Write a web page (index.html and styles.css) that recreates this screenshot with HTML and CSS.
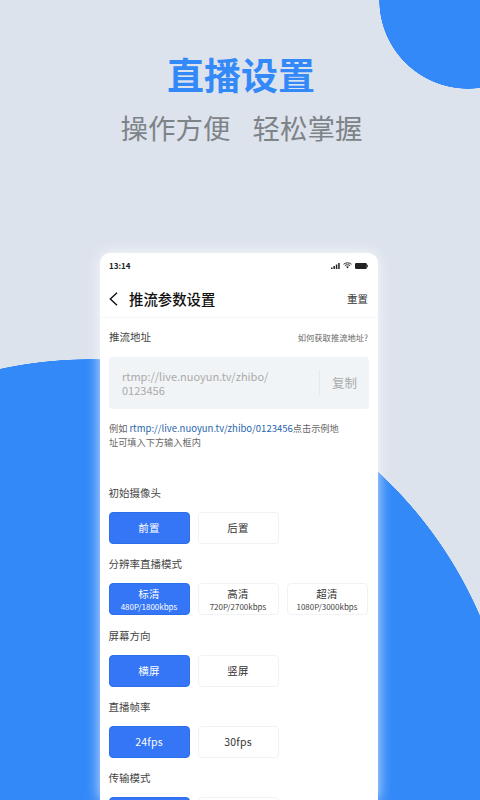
FILE: index.html
```html
<!DOCTYPE html>
<html lang="zh-CN">
<head>
<meta charset="UTF-8" />
<meta name="viewport" content="width=device-width, initial-scale=1" />
<title>直播设置</title>
<link rel="stylesheet" href="styles.css">
</head>
<body>
<div class="hero">
  <h1>直播设置</h1>
  <p class="slogan"><span>操作方便</span><span>轻松掌握</span></p>
</div>

<div class="phone">
  <div class="statusbar">
    <span class="time">13:14</span>
    <span class="status-icons">
      <svg width="9" height="6" viewBox="0 0 9 6"><rect x="0" y="4.500" width="1.500" height="1.500" fill="#222"/><rect x="2.400" y="3" width="1.500" height="3" fill="#222"/><rect x="4.800" y="1.500" width="1.500" height="4.500" fill="#222"/><rect x="7.200" y="0" width="1.500" height="6" fill="#222"/></svg>
      <svg width="9" height="7" viewBox="0 0 10 8"><path d="M.5 2.600C3 .4 7 .4 9.500 2.600M2 4.200c1.700-1.400 4.300-1.400 6 0" fill="none" stroke="#222" stroke-width="1.100"/><path d="M3.400 5.500c1-.8 2.200-.8 3.200 0L5 7.500z" fill="#222"/></svg>
      <svg width="13" height="6" viewBox="0 0 13 6"><rect x="0" y="0" width="11.800" height="6" rx="1.200" fill="#222"/><rect x="12.200" y="1.800" width=".8" height="2.400" fill="#222"/></svg>
    </span>
  </div>

  <div class="navbar">
    <svg class="back" width="9" height="14" viewBox="0 0 9 14"><path d="M8 .7L1.300 7 8 13.300" fill="none" stroke="#111" stroke-width="1.400"/></svg>
    <span class="nav-title">推流参数设置</span>
    <span class="nav-reset">重置</span>
  </div>

  <div class="content">
    <div class="addr-head">
      <span class="label">推流地址</span>
      <span class="help">如何获取推流地址?</span>
    </div>
    <div class="addr-box">
      <div class="addr-text">rtmp://live.nuoyun.tv/zhibo/<br>0123456</div>
      <div class="copy">复制</div>
    </div>
    <p class="hint">例如 <a>rtmp://live.nuoyun.tv/zhibo/0123456</a>点击示例地址可填入下方输入框内</p>

    <div class="group first">
      <div class="label">初始摄像头</div>
      <div class="options">
        <div class="opt on">前置</div>
        <div class="opt">后置</div>
      </div>
    </div>
    <div class="group">
      <div class="label">分辨率直播模式</div>
      <div class="options">
        <div class="opt on">标清<small>480P/1800kbps</small></div>
        <div class="opt">高清<small>720P/2700kbps</small></div>
        <div class="opt">超清<small>1080P/3000kbps</small></div>
      </div>
    </div>
    <div class="group">
      <div class="label">屏幕方向</div>
      <div class="options">
        <div class="opt on">横屏</div>
        <div class="opt">竖屏</div>
      </div>
    </div>
    <div class="group">
      <div class="label">直播帧率</div>
      <div class="options">
        <div class="opt on">24fps</div>
        <div class="opt">30fps</div>
      </div>
    </div>
    <div class="group">
      <div class="label">传输模式</div>
      <div class="options">
        <div class="opt on"></div>
        <div class="opt"></div>
      </div>
    </div>
  </div>
</div>
</body>
</html>
```

FILE: styles.css
```css
html, body {
  margin: 0; padding: 0;
  height: 800px;
  overflow: hidden;
}
body {
  width: 480px;
  font-family: "Noto Sans CJK SC", "Noto Sans", sans-serif;
  color: #333;
  background:
    radial-gradient(circle at 468px 0, #3489f8 88.500px, transparent 89px),
    radial-gradient(circle at 90px 784px, #3489f8 424.500px, transparent 425px),
    #dde3ed;
}
.hero {
  height: 253px;
  padding-top: 52px;
  box-sizing: border-box;
  text-align: center;
}
h1 {
  margin: 0;
  padding-left: 2px;
  font-size: 37px;
  line-height: 44px;
  font-weight: 700;
  color: #3489f8;
}
.slogan {
  margin: 11px 0 0;
  padding-left: 3px;
  font-size: 27.500px;
  line-height: 40px;
  color: #7e8388;
  display: flex;
  justify-content: center;
  gap: 22px;
}
.phone {
  width: 278px;
  height: 547px;
  margin-left: 100px;
  background: #fff;
  border-radius: 10px 10px 0 0;
  box-shadow: 0 0 14px rgba(255,255,255,0.8);
  overflow: hidden;
}
.statusbar {
  display: flex;
  justify-content: space-between;
  align-items: center;
  height: 25px;
  padding: 0 10px 1px 9px;
}
.time { font-size: 8px; font-weight: 700; color: #222; }
.status-icons { display: flex; align-items: center; gap: 3px; }
.navbar {
  display: flex;
  align-items: center;
  height: 37px;
  padding: 1px 10px 0 9px;
  border-bottom: 1px solid #f6f7f8;
}
.back { margin-right: 11px; }
.nav-title { font-size: 14.400px; font-weight: 500; color: #111; flex: 1; }
.nav-reset { font-size: 10.500px; color: #333; }
.content { padding: 0 9px; }
.addr-head {
  display: flex;
  justify-content: space-between;
  align-items: center;
  height: 38px;
  margin-bottom: 1px;
}
.label { font-size: 10.500px; color: #444; line-height: 16px; }
.help { font-size: 8.300px; color: #666; margin-right: 1px; }
.addr-box {
  display: flex;
  align-items: center;
  height: 52px;
  background: #f1f4f6;
  border-radius: 4px;
}
.addr-text {
  flex: 1;
  padding-left: 13px;
  font-size: 11px;
  line-height: 14px;
  color: #aaa;
}
.copy {
  width: 49px;
  height: 26px;
  line-height: 26px;
  border-left: 1px solid #e6e9ec;
  text-align: center;
  font-size: 12.500px;
  color: #aaa;
}
.hint {
  margin: 12px 0 0;
  width: 236px;
  font-size: 9.200px;
  line-height: 14px;
  color: #666;
}
.hint a { font-size: 9.500px; color: #1f64ae; }
.group { margin-top: 12.330px; }
.group.first { margin-top: 36px; }
.group .label { line-height: 16px; margin-left: -0.500px; }
.options {
  display: flex;
  gap: 8px;
  margin: 11px 0 0 -0.500px;
}
.opt {
  width: 81px;
  height: 32px;
  box-sizing: border-box;
  display: flex;
  flex-direction: column;
  align-items: center;
  justify-content: center;
  border: 1px solid #f1f2f3;
  border-radius: 4px;
  background: #fff;
  font-size: 10.500px;
  line-height: 14px;
  letter-spacing: 0.200px;
  color: #333;
}
.opt small { font-size: 8px; line-height: 11px; letter-spacing: 0; color: #444; }
.opt.on {
  background: #3476f6;
  border-color: #2c6fe8;
  color: #fff;
}
.opt.on small { color: #fff; }
```
